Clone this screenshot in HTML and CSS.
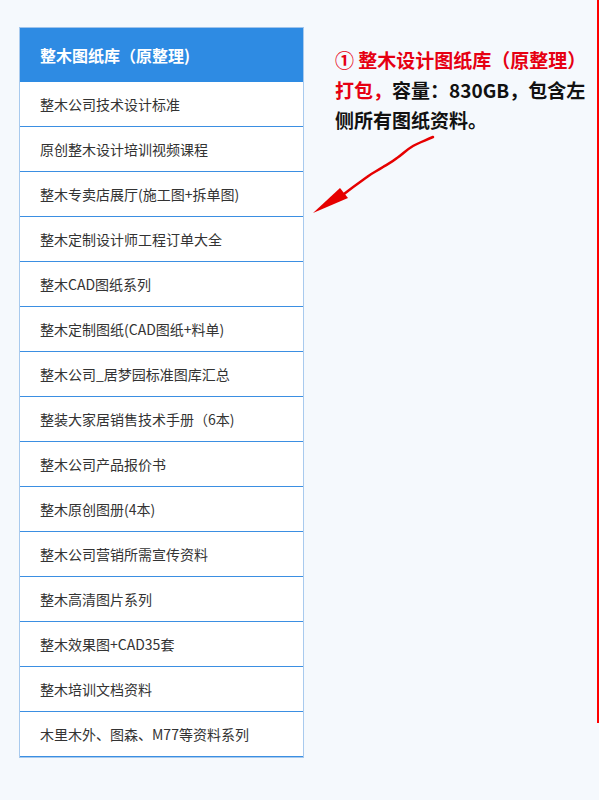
FILE: index.html
```html
<!DOCTYPE html>
<html lang="zh-CN">
<head>
    <meta charset="UTF-8">
    <meta name="viewport" content="width=device-width, initial-scale=1.0">
    <title>整木图纸库</title>
    <link rel="stylesheet" href="styles.css">
</head>
<body>

    <div class="page">
        <!-- 左侧资料列表 -->
        <div class="panel">
            <div class="panel-title">整木图纸库（原整理)</div>
            <ul class="list">
                <li>整木公司技术设计标准</li>
                <li>原创整木设计培训视频课程</li>
                <li>整木专卖店展厅(施工图+拆单图)</li>
                <li>整木定制设计师工程订单大全</li>
                <li>整木CAD图纸系列</li>
                <li>整木定制图纸(CAD图纸+料单)</li>
                <li>整木公司_居梦园标准图库汇总</li>
                <li>整装大家居销售技术手册（6本)</li>
                <li>整木公司产品报价书</li>
                <li>整木原创图册(4本)</li>
                <li>整木公司营销所需宣传资料</li>
                <li>整木高清图片系列</li>
                <li>整木效果图+CAD35套</li>
                <li>整木培训文档资料</li>
                <li>木里木外、图森、M77等资料系列</li>
            </ul>
        </div>

        <!-- 右侧说明 -->
        <div class="note">
            <p class="note-text">
                <span class="red">① 整木设计图纸库（原整理）</span><br>
                <span class="red">打包，</span>容量：830GB，包含左<br>
                侧所有图纸资料。
            </p>
        </div>

        <!-- 手绘箭头 -->
        <svg class="arrow" width="150" height="110" viewBox="0 0 150 110">
            <path d="M133,17 C124,21 118,23 113,26 C106,30 102,35 97,38 C92,42 88,44 83,47 C77,51 72,53 67,57 C60,62 54,66 44,74"
                  fill="none" stroke="#e60000" stroke-width="2.5" stroke-linecap="round"/>
            <polygon points="13,93 40,68 48,78" fill="#e60000"/>
        </svg>
    </div>

</body>
</html>
```

FILE: styles.css
```css
body {
    margin: 0;
    padding: 0;
    background: #f5f9fd;
    font-family: "Noto Sans CJK SC", "Noto Sans", sans-serif;
}

.page {
    position: relative;
    width: 599px;
    display: flex;
    align-items: flex-start;
}

.panel {
    margin: 27px 0 0 19px;
    width: 283px;
    border: 1px solid #a8caee;
    border-top-color: #9fc4ec;
    background: #fff;
}

.panel-title {
    height: 54px;
    line-height: 54px;
    padding-left: 20px;
    background: #2e8be3;
    color: #fff;
    font-size: 16px;
    font-weight: bold;
}

.list {
    list-style: none;
    margin: 0;
    padding: 0;
}

.list li {
    height: 44px;
    line-height: 44px;
    padding-left: 20px;
    border-bottom: 1px solid #3b8fe2;
    font-size: 14px;
    color: #333;
}

.note {
    flex: 1;
    height: 723px;
    padding: 45px 0 0 31px;
    box-sizing: border-box;
    border-right: 2px solid #f00;
}

.note-text {
    margin: 0;
    font-size: 19px;
    line-height: 30px;
    font-weight: bold;
    color: #111;
    white-space: nowrap;
}

.red {
    color: #e60012;
}

.arrow {
    position: absolute;
    left: 300px;
    top: 120px;
}
```
